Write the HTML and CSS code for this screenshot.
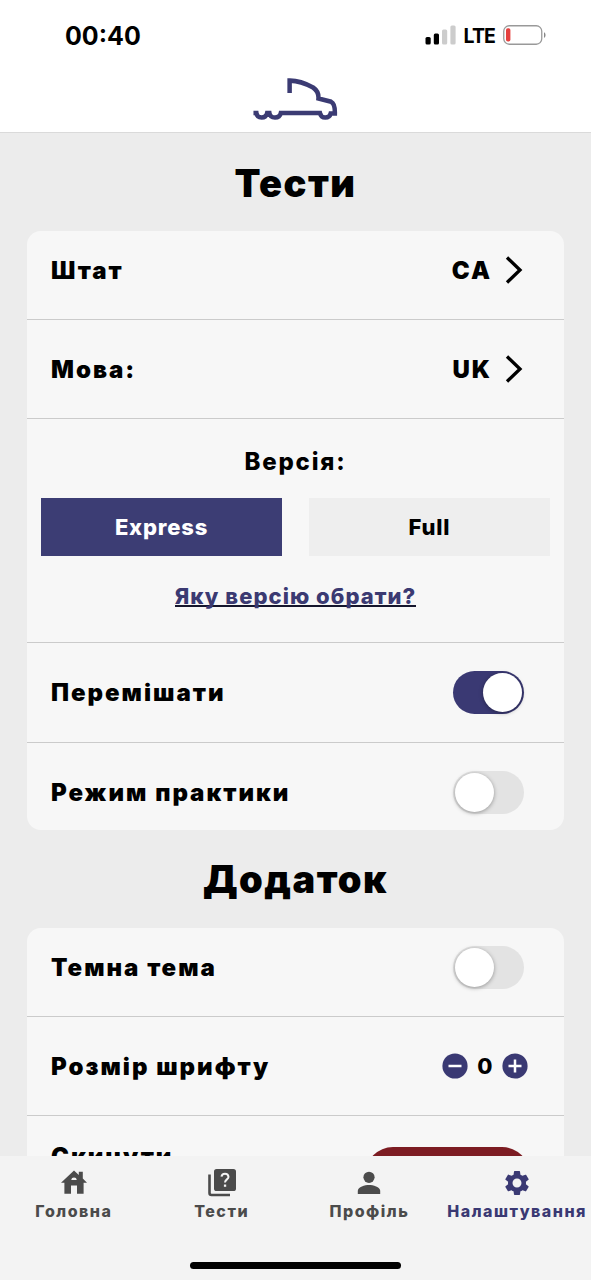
FILE: index.html
```html
<!DOCTYPE html>
<html lang="uk">
<head>
<meta charset="utf-8">
<title>Налаштування</title>
<link rel="stylesheet" href="styles.css">
</head>
<body>
<div class="app">
  <header class="header">
    <div class="status">
      <span class="time">00:40</span>
      <div class="status-right">
        <svg class="signal" width="32" height="20" viewBox="0 0 32 20">
          <rect x="0.5" y="12" width="5.2" height="7.5" rx="1.5" fill="#000"/>
          <rect x="8.8" y="8.5" width="5.2" height="11" rx="1.5" fill="#000"/>
          <rect x="17" y="4.5" width="5.2" height="15" rx="1.5" fill="#ccc"/>
          <rect x="25.4" y="0.5" width="5.2" height="19" rx="1.5" fill="#ccc"/>
        </svg>
        <span class="lte">LTE</span>
        <svg class="battery" width="44" height="20" viewBox="0 0 44 20">
          <rect x="0.75" y="0.75" width="38" height="18.5" rx="5.5" fill="none" stroke="#999" stroke-width="1.3"/>
          <rect x="3" y="3.3" width="4.4" height="13.2" rx="1.8" fill="#e5413f"/>
          <path d="M41 7.2c2 .6 2 5 0 5.6z" fill="#888"/>
        </svg>
      </div>
    </div>
    <svg class="truck" width="86" height="44" viewBox="0 0 88 44" preserveAspectRatio="none" fill="none" stroke="#3b3b73" stroke-width="4.6">
      <path d="M38.5 17V4.6C46 4.5 56 8 62.500 11.500Q68.500 15.500 68 22.500L81 25.800Q85 27.500 84.800 37.500H80.500Q79.500 41.500 75 41.500T69.500 37H29.500Q28.500 41.500 23.500 41.500T17.800 37H15.500Q14.500 41.500 9.800 41.500T4.500 37H1.500"/>
    </svg>
  </header>

  <main class="content">
    <h1 class="title">Тести</h1>
    <section class="card">
      <div class="row row-first"><span>Штат</span>
        <div class="value"><span>CA</span><svg width="18" height="28" viewBox="0 0 18 28"><path d="M2 1.500L15 14L2 26.500"/></svg></div>
      </div>
      <div class="row"><span>Мова:</span>
        <div class="value"><span>UK</span><svg width="18" height="28" viewBox="0 0 18 28"><path d="M2 1.500L15 14L2 26.500"/></svg></div>
      </div>
      <div class="version">
        <div class="version-title">Версія:</div>
        <div class="options">
          <button class="option option-active">Express</button>
          <button class="option">Full</button>
        </div>
        <a class="help">Яку версію обрати?</a>
      </div>
      <div class="row row-shuffle"><span>Перемішати</span><div class="switch switch-on"><i class="knob"></i></div></div>
      <div class="row row-last"><span>Режим практики</span><div class="switch"><i class="knob"></i></div></div>
    </section>

    <h1 class="title title-app">Додаток</h1>
    <section class="card">
      <div class="row row-first"><span>Темна тема</span><div class="switch"><i class="knob"></i></div></div>
      <div class="row"><span>Розмір шрифту</span>
        <div class="stepper">
          <svg width="26" height="26" viewBox="0 0 26 26"><circle cx="13" cy="13" r="12.600" fill="#3a3973"/><path d="M6.500 13h13" stroke="#fff" stroke-width="2.500"/></svg>
          <span>0</span>
          <svg width="26" height="26" viewBox="0 0 26 26"><circle cx="13" cy="13" r="12.600" fill="#3a3973"/><path d="M6.500 13h13M13 6.500v13" stroke="#fff" stroke-width="2.500"/></svg>
        </div>
      </div>
      <div class="row row-reset"><span>Скинути</span><div class="reset"></div></div>
    </section>
  </main>

  <nav class="tabs">
    <div class="tab">
      <svg width="30" height="30" viewBox="0 0 30 30" fill="#4b4b4b"><path d="M15 3.500L19.800 8V4.800h4V11.600L28 15.800H24.600V26.800H18V18.500H12V26.800H5.400V15.800H2Z"/><path d="M12.200 13Q12.500 10.600 15 10.600T17.800 13z" fill="#f3f3f3"/></svg>
      <span>Головна</span>
    </div>
    <div class="tab">
      <svg width="30" height="30" viewBox="0 0 30 30" fill="none"><path d="M2.500 7.500V26Q2.500 28 4.500 28H23" stroke="#4b4b4b" stroke-width="2.600"/><rect x="7" y="2" width="22" height="22" rx="2.600" fill="#4b4b4b"/><path d="M14.500 9.700Q14.800 6.700 18 6.700T21.500 9.900C21.500 12.300 18 12.500 18 15.500" stroke="#f3f3f3" stroke-width="2"/><path d="M16.900 17.500h2.300v2.300h-2.300z" fill="#f3f3f3"/></svg>
      <span>Тести</span>
    </div>
    <div class="tab">
      <svg width="30" height="30" viewBox="0 0 30 30" fill="#4b4b4b"><circle cx="15" cy="10.300" r="5.600"/><path d="M3.800 27V23.800C3.800 20 11 18 15 18S26.200 20 26.200 23.800V27z"/></svg>
      <span>Профіль</span>
    </div>
    <div class="tab tab-active">
      <svg width="32" height="32" viewBox="0 0 24 24" fill="#3a3973"><path d="M19.140 12.940c.04-.3.060-.61.060-.94 0-.32-.02-.64-.07-.94l2.030-1.580c.18-.14.230-.41.120-.61l-1.920-3.320c-.12-.22-.37-.29-.59-.22l-2.390.96c-.5-.38-1.030-.7-1.620-.94l-.36-2.540c-.04-.24-.24-.41-.48-.41h-3.840c-.24 0-.43.170-.47.410l-.36 2.540c-.59.240-1.130.570-1.620.940l-2.390-.96c-.22-.08-.47 0-.59.220L2.740 8.870c-.12.210-.08.470.120.610l2.030 1.580c-.05.300-.09.630-.09.940s.02.640.070.940l-2.030 1.580c-.18.140-.23.410-.12.610l1.920 3.320c.12.220.370.290.590.220l2.390-.96c.5.380 1.030.7 1.620.94l.36 2.540c.05.240.240.410.480.410h3.840c.24 0 .44-.17.470-.41l.36-2.540c.59-.24 1.130-.56 1.620-.94l2.390.96c.22.080.470 0 .59-.22l1.920-3.320c.12-.22.070-.47-.12-.61l-2.010-1.580zM12 15.600c-1.980 0-3.600-1.620-3.600-3.600s1.620-3.600 3.600-3.600 3.600 1.620 3.600 3.600-1.620 3.600-3.600 3.600z"/></svg>
      <span>Налаштування</span>
    </div>
    <div class="home-indicator"></div>
  </nav>
</div>
</body>
</html>
```
FILE: styles.css
```css
* { box-sizing: border-box; }
body { margin: 0; font-family: Inter, "Liberation Sans", sans-serif; color: #000; }
svg { display: block; flex: none; }
.app { height: 1280px; display: flex; flex-direction: column; overflow: hidden; background: #ececec; }
.header { height: 133px; flex: none; background: #fff; border-bottom: 1px solid #dadada; display: flex; flex-direction: column; }
.status { height: 71px; padding: 0 44px 0 65px; display: flex; align-items: center; justify-content: space-between; }
.time { font-size: 25px; font-weight: 700; letter-spacing: 0; }
.status-right { display: flex; align-items: center; }
.signal { margin-top: -1px; }
.battery { margin-top: -1px; }
.lte { font-size: 19.5px; font-weight: 700; margin: 1px 8px 0 7px; letter-spacing: -0.9px; }
.truck { margin: 5px 0 0 252px; }

.content { flex: 1; min-height: 0; overflow: hidden; padding: 0 27px; }
.title { margin: 0; height: 98px; line-height: 100px; font-size: 38px; font-weight: 900; letter-spacing: 1.5px; text-align: center; }
.title-app { height: 98px; line-height: 99px; }
.card { background: #f7f7f7; border-radius: 14px; overflow: hidden; }
.row { height: 99px; padding: 0 40px 0 24px; display: flex; align-items: center; justify-content: space-between; border-bottom: 1.5px solid #cbcbcb; font-size: 24px; font-weight: 900; letter-spacing: 2px; }
.row-first { height: 89px; padding-bottom: 10px; }
.row-shuffle { height: 100px; }
.row-last { height: 87px; border-bottom: 0; align-items: flex-start; }
.row-last > span { line-height: 99px; }
.row-last .switch { margin-top: 28px; }
.value { display: flex; align-items: center; gap: 13px; margin-right: 1px; }
.value svg { fill: none; stroke: #000; stroke-width: 3.3; }
.version { height: 224px; padding: 24px 14px 0; border-bottom: 1.5px solid #cbcbcb; text-align: center; }
.version-title { height: 55px; line-height: 37px; font-size: 24px; font-weight: 800; letter-spacing: 1.8px; }
.options { display: grid; grid-template-columns: 1fr 1fr; gap: 27px; }
.option { height: 58px; border: 0; padding: 0; background: #eee; color: #000; font-family: inherit; font-size: 22px; font-weight: 800; letter-spacing: 0.8px; }
.option-active { background: #3c3d74; color: #fff; }
.help { display: inline-block; margin-top: 27px; height: 24px; line-height: 27px; font-size: 22px; font-weight: 800; letter-spacing: 1.05px; color: #3b3a72; border-bottom: 2px solid #15152c; }
.switch { width: 71px; height: 43px; border-radius: 22px; background: #e3e3e3; padding: 2px; display: flex; flex: none; }
.switch-on { background: #3a3973; justify-content: flex-end; }
.knob { width: 39px; height: 39px; border-radius: 50%; background: #fff; box-shadow: 0 1px 4px rgba(0,0,0,.35); }
.stepper { display: flex; align-items: center; gap: 9.5px; margin-right: -4px; font-size: 22px; font-weight: 800; letter-spacing: 0; }
.row-reset { border: 0; align-items: flex-start; }
.row-reset > span { margin-top: 26px; line-height: 30px; }
.reset { width: 165px; height: 60px; border-radius: 28px; background: #7c1c22; margin: 31px -6px 0 0; }
.tabs { height: 124px; flex: none; background: #f3f3f3; display: grid; grid-template-columns: repeat(4, 1fr); grid-template-rows: 108px 16px; }
.tab { display: flex; flex-direction: column; align-items: center; padding-top: 11px; color: #4b4b4b; font-size: 16px; font-weight: 800; letter-spacing: 1.5px; }
.tab svg { height: 30px; }
.tab span { line-height: 20px; margin-top: 4px; white-space: nowrap; }
.tab-active { color: #3a3973; }
.tab-active svg { margin-top: 1px; margin-bottom: -1px; }
.home-indicator { grid-column: 1 / -1; justify-self: center; width: 211px; height: 7px; margin-top: -2px; border-radius: 4px; background: #000; }
```
